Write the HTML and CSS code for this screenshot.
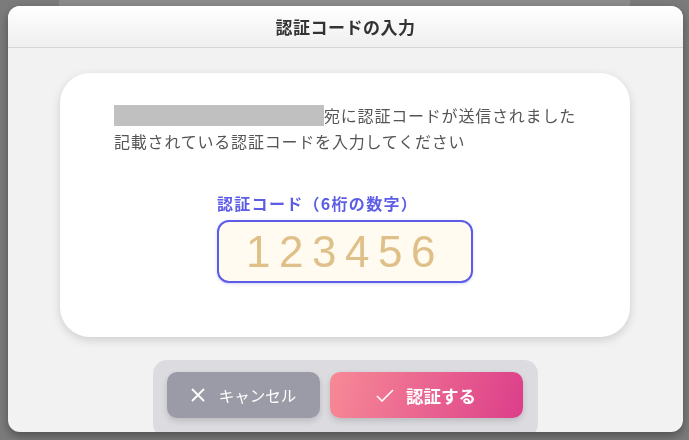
FILE: index.html
```html
<!DOCTYPE html>
<html lang="ja">
<head>
    <meta charset="UTF-8">
    <meta name="viewport" content="width=device-width, initial-scale=1.0">
    <title>認証コードの入力</title>
    <link rel="stylesheet" href="styles.css">
</head>
<body>
    <div class="page">
        <div class="page-card"></div>
    </div>

    <div class="modal">
        <div class="modal-header">認証コードの入力</div>
        <div class="modal-body">
            <div class="card">
                <p class="message">
                    <span class="masked"></span>宛に認証コードが送信されました<br>
                    記載されている認証コードを入力してください
                </p>
                <div class="code-group">
                    <label for="code">認証コード（6桁の数字）</label>
                    <input type="text" id="code" class="code-input" placeholder="123456" maxlength="6">
                </div>
            </div>
            <div class="actions">
                <button type="button" class="btn btn-cancel">
                    <svg width="16" height="16" viewBox="0 0 16 16"><path d="M2 2L14 14M14 2L2 14" stroke="#fff" stroke-width="1.8" fill="none"/></svg>
                    キャンセル
                </button>
                <button type="submit" class="btn btn-confirm">
                    <svg width="18" height="13" viewBox="0 0 18 13"><path d="M1 7L6 12L17 1" stroke="#fff" stroke-width="1.6" fill="none"/></svg>
                    認証する
                </button>
            </div>
        </div>
    </div>
</body>
</html>
```

FILE: styles.css
```css
:root {
    --overlay: #7b7b7b;
    --modal-bg: #f2f2f2;
    --text-color: #555555;
    --title-color: #333333;
    --accent: #5c5ce6;
    --code-bg: #fffbf0;
    --code-digits: #e0c089;
}

body {
    margin: 0;
    background-color: var(--overlay);
    font-family: 'Noto Sans CJK JP', sans-serif;
    height: 440px;
    overflow: hidden;
}

.page {
    padding: 0 59px;
}

.page-card {
    height: 420px;
    background-color: #8c8c8c;
}

.modal {
    position: fixed;
    left: 8px;
    top: 6px;
    width: 675px;
    height: 426px;
    background-color: var(--modal-bg);
    border-radius: 12px;
    box-shadow: 0 4px 10px rgba(0, 0, 0, 0.35);
    overflow: hidden;
}

.modal-header {
    height: 41px;
    line-height: 41px;
    text-align: center;
    font-size: 17px;
    font-weight: bold;
    color: var(--title-color);
    letter-spacing: 0.5px;
    background: linear-gradient(#ffffff, #efefef);
    border-bottom: 1px solid #d6d6d6;
}

.modal-body {
    padding: 25px 53px 0 52px;
}

.card {
    height: 264px;
    box-sizing: border-box;
    padding: 29px 54px 0;
    background-color: #ffffff;
    border-radius: 30px;
    box-shadow: 0 3px 10px rgba(0, 0, 0, 0.15);
}

.message {
    margin: 0;
    font-size: 16px;
    line-height: 26px;
    letter-spacing: 0.8px;
    color: var(--text-color);
}

.masked {
    display: inline-block;
    width: 210px;
    height: 21px;
    vertical-align: -4px;
    background-color: #c0c0c0;
}

.code-group {
    width: 256px;
    margin: 38px auto 0;
}

.code-group label {
    display: block;
    font-size: 16px;
    font-weight: bold;
    line-height: 22px;
    letter-spacing: 1.3px;
    color: var(--accent);
    margin-bottom: 6px;
}

.code-input {
    display: block;
    width: 100%;
    height: 63px;
    box-sizing: border-box;
    border: 2px solid var(--accent);
    border-radius: 12px;
    background-color: var(--code-bg);
    font-family: 'Liberation Sans', Arial, sans-serif;
    font-size: 44px;
    letter-spacing: 8.5px;
    text-align: center;
    color: #b08a40;
    padding: 0;
    outline: none;
    box-shadow: 0 1px 3px rgba(92, 92, 230, 0.25);
}

.code-input::placeholder {
    color: var(--code-digits);
    opacity: 1;
}

.actions {
    width: 385px;
    box-sizing: border-box;
    margin: 23px auto 0;
    padding: 12px 15px 20px 14px;
    display: flex;
    gap: 10px;
    background-color: #dcdbe0;
    border-radius: 14px;
}

.btn {
    height: 46px;
    border: none;
    border-radius: 10px;
    display: flex;
    align-items: center;
    justify-content: center;
    gap: 13px;
    color: #ffffff;
    font-family: 'Noto Sans CJK JP', sans-serif;
    cursor: pointer;
    box-shadow: 0 3px 6px rgba(0, 0, 0, 0.15);
}

.btn-cancel {
    width: 153px;
    background-color: #9b9ba7;
    font-size: 15.5px;
}

.btn-confirm {
    width: 193px;
    background: linear-gradient(105deg, #f78a96, #dc3e8a);
    font-size: 17.5px;
    font-weight: bold;
    gap: 12px;
}
```
